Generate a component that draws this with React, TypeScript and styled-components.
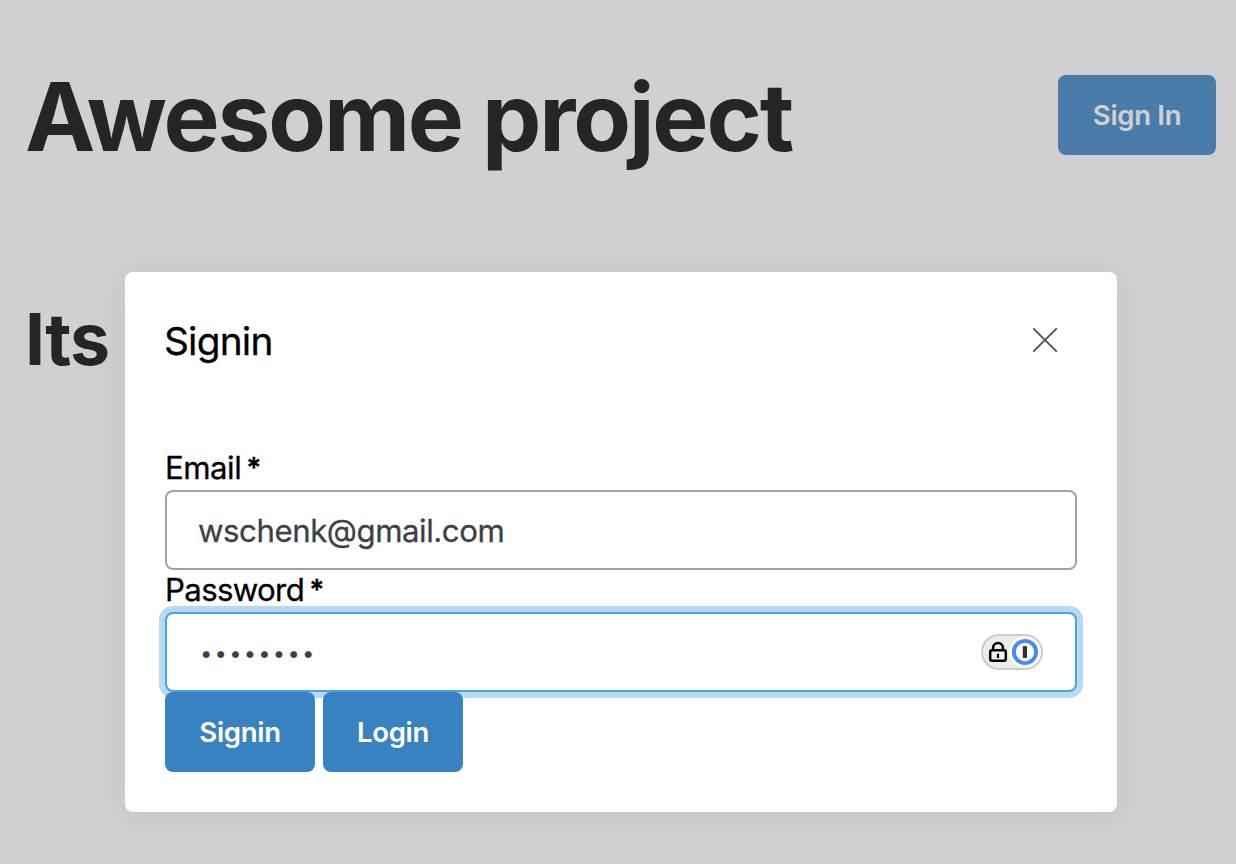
import React from "react";
import styled, { createGlobalStyle } from "styled-components";

const GlobalStyle = createGlobalStyle`
  * { box-sizing: border-box; }
  body {
    margin: 0;
    background: #fff;
    color: #000;
    font-family: Inter, "Liberation Sans", sans-serif;
    overflow: hidden;
  }
`;

const Page = styled.div`
  position: relative;
  width: 100%;
  height: 864px;
  overflow: hidden;
`;

const TopBar = styled.header`
  display: flex;
  align-items: center;
  justify-content: space-between;
  height: 230px;
  padding: 0 20px 0 25px;
`;

const Heading = styled.h1`
  margin: 0;
  padding-top: 4px;
  font-size: 94.3px;
  line-height: 116px;
  font-weight: 700;
  letter-spacing: -2.15px;
  white-space: nowrap;
`;

const Subheading = styled.h2`
  margin: 64px 0 0 25px;
  font-size: 71.5px;
  line-height: 90px;
  font-weight: 700;
  letter-spacing: -0.9px;
`;

const Button = styled.button<{ $width: number }>`
  display: inline-flex;
  align-items: center;
  justify-content: center;
  width: ${(p) => p.$width}px;
  height: 80px;
  padding: 0 0 1px;
  border: 0;
  border-radius: 8px;
  background: #3882c2;
  color: #fff;
  font: 600 27.5px Inter, "Liberation Sans", sans-serif;
  letter-spacing: -0.3px;
  white-space: nowrap;
`;

const Overlay = styled.div`
  position: absolute;
  inset: 0;
  display: flex;
  align-items: flex-start;
  padding: 272px 0 0 125px;
  background: rgba(113, 113, 122, 0.33);
`;

const Dialog = styled.section`
  width: 992px;
  height: 540px;
  padding: 40px;
  border-radius: 8px;
  background: #fff;
  box-shadow: 0 4px 32px rgba(113, 113, 122, 0.12);
`;

const DialogHeader = styled.div`
  display: flex;
  align-items: center;
  justify-content: space-between;
  height: 58px;
  margin-bottom: 80px;
`;

const Title = styled.h3`
  margin: 0 0 0 -1px;
  font-size: 38.8px;
  line-height: 56px;
  font-weight: 400;
  letter-spacing: -0.8px;
  -webkit-text-stroke: 0.3px currentColor;
`;

const CloseButton = styled.button`
  display: flex;
  align-items: center;
  justify-content: center;
  width: 64px;
  height: 58px;
  padding: 0 0 2px;
  border: 0;
  background: none;
  color: #52525b;
`;

const Label = styled.label<{ $height: number; $spacing: number; $lift: number }>`
  display: flex;
  align-items: center;
  gap: 5px;
  height: ${(p) => p.$height}px;
  padding-bottom: ${(p) => p.$lift}px;
  font-size: 31.2px;
  letter-spacing: ${(p) => p.$spacing}px;
  -webkit-text-stroke: 0.3px currentColor;
`;

const Required = styled.span`
  font-size: 28px;
  font-weight: 600;
  line-height: 36px;
  letter-spacing: 0;
`;

const Field = styled.div<{ $focused?: boolean }>`
  display: flex;
  align-items: center;
  justify-content: space-between;
  height: 80px;
  padding: 0 32px;
  border: 2px solid ${(p) => (p.$focused ? "#4ba3e0" : "#a1a1aa")};
  border-radius: 8px;
  background: #fff;
  box-shadow: ${(p) => (p.$focused ? "0 0 0 6px #b6daf4" : "none")};
`;

const FieldText = styled.span`
  padding-top: 2px;
  margin-left: -1px;
  color: #3f3f46;
  font-size: 31.2px;
  letter-spacing: -0.45px;
  -webkit-text-stroke: 0.3px currentColor;
`;

const Mask = styled.span`
  padding-top: 2px;
  margin-left: 1px;
  color: #3f3f46;
  font-size: 22px;
  letter-spacing: 2.2px;
`;

const Actions = styled.div`
  position: relative;
  display: flex;
  gap: 8px;
`;

const PasswordBadge = () => (
  <svg width="62" height="36" viewBox="0 0 62 36" aria-hidden="true">
    <rect x="1" y="1" width="60" height="34" rx="17" fill="#ebebeb" stroke="#cccccc" strokeWidth="2" />
    <circle cx="44" cy="18" r="16" fill="#fff" />
    <circle cx="44" cy="18" r="11.1" fill="#fff" stroke="#448afb" strokeWidth="3.9" />
    <rect x="41.8" y="12" width="4.2" height="12" rx="0.5" fill="#333" />
    <rect x="9.2" y="16.2" width="15.6" height="10.6" rx="2" fill="#f3f3f3" stroke="#000" strokeWidth="2.5" />
    <path d="M12.1 16v-2.2a4.9 4.9 0 0 1 9.8 0V16" fill="none" stroke="#000" strokeWidth="2.5" />
    <path d="M17 19.7v4.3" stroke="#000" strokeWidth="2.2" />
  </svg>
);

export default function App() {
  return (
    <>
      <GlobalStyle />
      <Page>
        <TopBar>
          <Heading>Awesome project</Heading>
          <Button $width={158}>Sign In</Button>
        </TopBar>
        <Subheading>Its</Subheading>
        <Overlay>
          <Dialog role="dialog" aria-label="Signin">
            <DialogHeader>
              <Title>Signin</Title>
              <CloseButton aria-label="Close">
                <svg width="26" height="26" viewBox="0 0 26 26" fill="none" stroke="currentColor" strokeWidth="1.9" strokeLinecap="round">
                  <path d="M1.8 1.8l22.4 22.4M24.2 1.8l-22.4 22.4" />
                </svg>
              </CloseButton>
            </DialogHeader>
            <Label $height={40} $spacing={-0.5} $lift={4}>
              Email<Required>*</Required>
            </Label>
            <Field>
              <FieldText>wschenk@gmail.com</FieldText>
            </Field>
            <Label $height={42} $spacing={-0.65} $lift={2}>
              Password<Required>*</Required>
            </Label>
            <Field $focused>
              <Mask>••••••••</Mask>
              <PasswordBadge />
            </Field>
            <Actions>
              <Button $width={150}>Signin</Button>
              <Button $width={140}>Login</Button>
            </Actions>
          </Dialog>
        </Overlay>
      </Page>
    </>
  );
}
